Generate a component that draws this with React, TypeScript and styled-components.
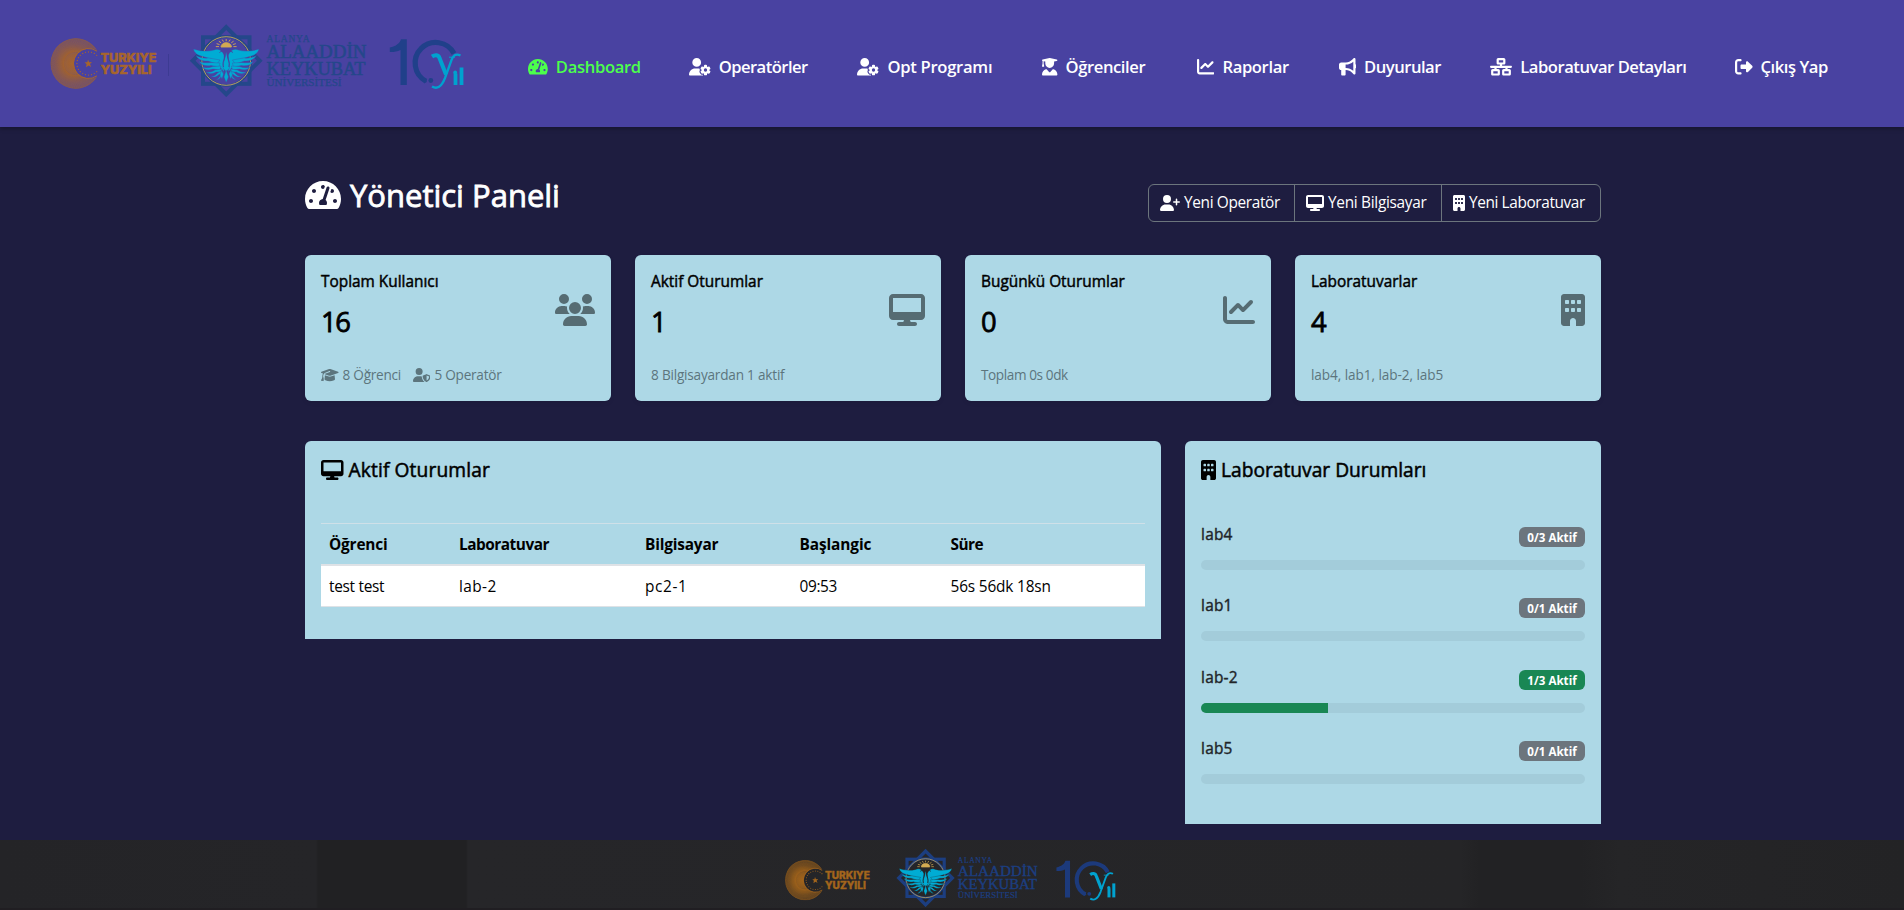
import React from "react";
import styled, { createGlobalStyle } from "styled-components";
import { FaTachometerAlt } from "react-icons/fa";
import {
  FaUserGear,
  FaUserGraduate,
  FaChartLine,
  FaBullhorn,
  FaNetworkWired,
  FaRightFromBracket,
  FaUserPlus,
  FaDesktop,
  FaBuilding,
  FaUsers,
  FaGraduationCap,
  FaUserShield,
} from "react-icons/fa6";
import type { IconType } from "react-icons";

const GlobalStyle = createGlobalStyle`
  *, *::before, *::after { box-sizing: border-box; }
  html, body { margin: 0; padding: 0; background: #1e1d40; overflow: hidden; }
  body { font-family: "Segoe UI", "Open Sans", "Noto Sans", sans-serif; font-size: 15.4px; line-height: 24px; color: #000; }
  h1, h2, h3, h4, p { margin: 0; font-weight: 400; }
  svg { display: block; flex: none; }
`;

/* ---------- page frame ---------- */

const Page = styled.div`
  display: flex;
  flex-direction: column;
  height: 910px;
  overflow: hidden;
`;

const Header = styled.header`
  display: flex;
  justify-content: space-between;
  height: 127px;
  flex: none;
  padding: 22px 75px 0 48px;
  background: #4942a1;
  box-shadow: 0 2px 4px rgba(0, 0, 0, 0.25);
`;

const Nav = styled.nav`
  display: flex;
  height: 90px;
  align-items: center;
  justify-content: space-between;
  width: 1301px;
`;

const NavLink = styled.a<{ $active?: boolean; $width: number; $tracking: number }>`
  display: flex;
  align-items: center;
  gap: 8px;
  width: ${(p) => p.$width}px;
  color: ${(p) => (p.$active ? "#4cff4c" : "#fff")};
  font-size: 16.6px;
  font-weight: 600;
  letter-spacing: ${(p) => p.$tracking}px;
  white-space: nowrap;
  text-decoration: none;
`;

/* Icons share one height; the width follows each glyph's own proportions. */
const Glyph = styled.span<{ $size: number; $ratio: number }>`
  display: flex;
  flex: none;
  svg {
    width: ${(p) => p.$size * p.$ratio}px;
    height: ${(p) => p.$size}px;
  }
`;

const Main = styled.main`
  flex: 1;
  width: 1296px;
  margin: 0 0 0 305px;
  padding-top: 48px;
`;

const Footer = styled.footer`
  display: flex;
  justify-content: center;
  height: 70px;
  flex: none;
  padding: 7px 3px 0 0;
  border-bottom: 2px solid #201e22;
  background: linear-gradient(
    90deg,
    #242427 0,
    #252528 316px,
    #212123 318px,
    #212123 466px,
    #262629 468px,
    #252527 1460px,
    #222224 1480px,
    #222224 1580px,
    #252527 1620px,
    #232325 100%
  );
`;

/* ---------- title row ---------- */

const TitleRow = styled.div`
  display: flex;
  justify-content: space-between;
  height: 80px;
`;

const Title = styled.h1`
  display: flex;
  align-items: center;
  gap: 9px;
  height: 40px;
  color: #fff;
  font-size: 31px;
  -webkit-text-stroke: 0.8px #fff;
  svg { stroke-width: 0; }
`;

const ButtonGroup = styled.div`
  display: flex;
  height: 38px;
  margin-top: 9px;
  border: 1px solid #6c757d;
  border-radius: 6px;
`;

const GroupButton = styled.button<{ $width: number; $tracking: number }>`
  display: flex;
  align-items: center;
  gap: 4px;
  width: ${(p) => p.$width}px;
  padding: 0 0 0 11px;
  border: 0;
  border-right: 1px solid #6c757d;
  background: none;
  color: #fff;
  font: inherit;
  letter-spacing: ${(p) => p.$tracking}px;
  white-space: nowrap;
  &:last-child { border-right: 0; }
`;

/* ---------- statistic cards ---------- */

const CardGrid = styled.div`
  display: grid;
  grid-template-columns: repeat(4, 306px);
  gap: 24px;
`;

const Card = styled.section`
  display: flex;
  flex-direction: column;
  justify-content: space-between;
  height: 146px;
  padding: 16px;
  border-radius: 6px;
  background: #add8e6;
  box-shadow: 0 2px 4px rgba(0, 0, 0, 0.08);
`;

const CardTop = styled.div`
  display: flex;
  justify-content: space-between;
  align-items: center;
  height: 78px;
  color: #566c73;
`;

const CardTitle = styled.h3`
  height: 31px;
  line-height: 21px;
  color: #000;
  font-size: 15.4px;
  -webkit-text-stroke: 0.45px #000;
`;

const CardValue = styled.p`
  height: 47px;
  line-height: 40px;
  color: #000;
  font-size: 27.4px;
  letter-spacing: -1.4px;
  -webkit-text-stroke: 0.8px #000;
`;

const CardNote = styled.div<{ $tracking?: number }>`
  display: flex;
  align-items: center;
  gap: 12px;
  height: 20px;
  color: #5c757d;
  font-size: 13.6px;
  letter-spacing: ${(p) => p.$tracking ?? 0}px;
`;

const NoteItem = styled.span`
  display: flex;
  align-items: center;
  gap: 4px;
`;

/* ---------- panels ---------- */

const PanelRow = styled.div`
  display: grid;
  grid-template-columns: 856px 416px;
  gap: 24px;
  align-items: start;
  margin-top: 40px;
`;

const Panel = styled.section<{ $height: number }>`
  height: ${(p) => p.$height}px;
  padding: 0 16px;
  border-radius: 6px 6px 0 0;
  background: #add8e6;
`;

const PanelHeading = styled.h2<{ $tracking?: number }>`
  display: flex;
  align-items: center;
  gap: 5px;
  height: 57px;
  font-size: 19.2px;
  letter-spacing: ${(p) => p.$tracking ?? 0}px;
  -webkit-text-stroke: 0.5px #000;
  svg { stroke-width: 0; }
`;

const Table = styled.div`
  margin-top: 25px;
  border-top: 1px solid #cfe0e8;
`;

const TableRow = styled.div<{ $head?: boolean }>`
  display: grid;
  grid-template-columns: 130px 186px 154.5px 151px 1fr;
  align-items: center;
  height: ${(p) => (p.$head ? 42 : 41)}px;
  padding: ${(p) => (p.$head ? 2 : 1)}px 0 0 8px;
  background: ${(p) => (p.$head ? "transparent" : "#fff")};
  font-weight: ${(p) => (p.$head ? 700 : 400)};
  border-bottom: ${(p) => (p.$head ? 2 : 1)}px solid #dee2e6;
`;

const Cell = styled.span<{ $tracking: number }>`
  letter-spacing: ${(p) => p.$tracking}px;
`;

const LabList = styled.div`
  display: flex;
  flex-direction: column;
  padding-top: 25px;
`;

const LabItem = styled.div`
  height: 71.3px;
`;

const LabTop = styled.div`
  display: flex;
  justify-content: space-between;
  height: 37px;
`;

const LabName = styled.h4`
  height: 24px;
  color: #212529;
  line-height: 23px;
  letter-spacing: 0.25px;
  -webkit-text-stroke: 0.4px #212529;
`;

const Badge = styled.span<{ $on: boolean }>`
  width: 66px;
  height: 20px;
  margin-top: 4px;
  border-radius: 6px;
  background: ${(p) => (p.$on ? "#198754" : "#6c757d")};
  color: #fff;
  font-size: 11.6px;
  font-weight: 700;
  line-height: 21px;
  text-align: center;
`;

const Track = styled.div`
  height: 10px;
  overflow: hidden;
  border-radius: 5px;
  background: #a3ccda;
`;

const TrackFill = styled.div`
  height: 100%;
  background: #198754;
`;

/* ---------- icons ---------- */

const ratios = new Map<IconType, number>([
  [FaTachometerAlt, 1.125],
  [FaDesktop, 1.125],
  [FaUserGear, 1.25],
  [FaUserPlus, 1.25],
  [FaUserShield, 1.25],
  [FaUsers, 1.25],
  [FaGraduationCap, 1.25],
  [FaNetworkWired, 1.25],
  [FaUserGraduate, 0.875],
  [FaBuilding, 0.75],
]);

function Icon({ of: Shape, size }: { of: IconType; size: number }) {
  return (
    <Glyph $size={size} $ratio={ratios.get(Shape) ?? 1}>
      <Shape />
    </Glyph>
  );
}

/* ---------- logos ---------- */

const rays = Array.from({ length: 36 }, (_, i) => i * 5);
const dots = Array.from({ length: 19 }, (_, i) => ((45 + i * 15) * Math.PI) / 180);
const sunRays = Array.from({ length: 9 }, (_, i) => ((180 + i * 22.5) * Math.PI) / 180);

interface LogoProps {
  width: number;
  height: number;
  orange: string;
  blue: string;
  navy: string;
  ground: string;
  divider?: string;
}

function Wing() {
  return (
    <>
      <path d="M224 55 C222 50 218 48 214 50 C207 52 199 51 193.500 49 C194 53 198 55.500 203 56.500 L214 60 L224 72 Z" />
      <path d="M196 55.500 C198 59.500 203 61.500 208 61 L217 64 L220 60 L209 58 C204 58.500 199 57.500 196 55.500 Z" />
      <path d="M199 61.500 C201 65 206 66.500 211 65.500 L219 67 L220 63 L211 62.500 C207 63 202 63 199 61.500 Z" />
      <path d="M202 67 C205 70 209 70.500 213 69 L220 70 L221 66 L213 66.500 C209 68 205 68 202 67 Z" />
      <path d="M206 72 C209 74.500 213 74 216 72 L222 72 L222 69 L215 70 C212 72 209 72.500 206 72 Z" />
      <path d="M211 76.500 C214 78 217 76.500 219 74.500 L223 74 L222 71 L218 72.500 C216 75 214 76.500 211 76.500 Z" />
      <path d="M216 80 C219 80 221 77.500 222 75 L224 72 L221 74 C220 77 218 79 216 80 Z" />
    </>
  );
}

function Logos({ width, height, orange, blue, navy, ground, divider }: LogoProps) {
  const id = "glow" + width;
  return (
    <svg width={width} height={height} viewBox="48 22 420 75">
      <defs>
        <radialGradient id={id} gradientUnits="userSpaceOnUse" cx="73" cy="63.500" r="25">
          <stop offset="0" stopColor={orange} />
          <stop offset="0.35" stopColor={orange} stopOpacity="0.85" />
          <stop offset="0.75" stopColor={orange} stopOpacity="0.45" />
          <stop offset="1" stopColor={orange} stopOpacity="0.3" />
        </radialGradient>
        <clipPath id={id + "c"}>
          <path d="M98 50.500 A25.500 25.500 0 1 0 98 76.500 A15 15 0 1 1 98 50.500 Z" />
        </clipPath>
      </defs>
      <g clipPath={`url(#${id}c)`}>
        <circle cx="75.500" cy="63.500" r="25.500" fill={`url(#${id})`} />
        <g fill="none" stroke={orange} strokeWidth="0.3" opacity="0.7">
          {rays.map((a) => (
            <ellipse key={a} cx="75.500" cy="63.500" rx="25" ry="12" transform={`rotate(${a} 75.500 63.500)`} />
          ))}
        </g>
      </g>
      <circle cx="88.500" cy="63.500" r="14.500" fill={ground} />
      <path d="M97 51.200 A15 15 0 1 0 97 75.800" fill="none" stroke={orange} strokeWidth="1" />
      <g fill={orange}>
        {dots.map((a) => (
          <circle key={a} cx={88.5 + 11.6 * Math.cos(a)} cy={63.5 + 11.6 * Math.sin(a)} r="0.65" />
        ))}
        <path d="M88 59.500 L89.200 62.200 L92 62 L90 64.100 L91.200 67 L88.600 65.500 L86 67.300 L86.600 64.300 L84.600 62.300 L87.300 62.200 Z" />
      </g>
      <g fill={orange} stroke={orange} strokeWidth="0.5" fontFamily="Inter, sans-serif" fontWeight="800" fontSize="12.200">
        <text x="100.500" y="62.200" textLength="56" lengthAdjust="spacingAndGlyphs">TURKIYE</text>
        <text x="100.500" y="74" textLength="51" lengthAdjust="spacingAndGlyphs">YUZYILI</text>
      </g>
      {divider && <rect x="168" y="54" width="1" height="22" fill={divider} />}

      <g fill="none" stroke={blue} strokeWidth="4">
        <rect x="203" y="37.300" width="46.500" height="46.500" />
        <rect x="202.500" y="37" width="47.500" height="47.500" transform="rotate(45 226.250 60.700)" />
      </g>
      <circle cx="226.200" cy="61" r="24.500" fill={ground} stroke={blue} strokeWidth="2.500" />
      <circle cx="226.200" cy="61" r="24.300" fill="none" stroke="#c9a75a" strokeWidth="0.9" />
      <g fill="#d3aa52" stroke="#d3aa52" strokeWidth="0.9">
        <path d="M221 47 A5.200 4.300 0 0 1 231.400 47 Z" />
        {sunRays.map((a) => (
          <line
            key={a}
            x1={226.2 + 7.2 * Math.cos(a)}
            y1={46.6 + 5.4 * Math.sin(a)}
            x2={226.2 + 10.4 * Math.cos(a)}
            y2={46.6 + 7.6 * Math.sin(a)}
          />
        ))}
      </g>
      <g fill="#00acd4" stroke={ground} strokeWidth="0.35">
        <Wing />
        <g transform="translate(452.400 0) scale(-1 1)">
          <Wing />
        </g>
        <path d="M226.200 52 L229 63 L229.500 68 L226.200 72 L223 68 L223.500 63 Z" />
        <path d="M226.200 70 L228.500 77 L226.200 82.500 L224 77 Z" />
        <path d="M221.500 70 L223.500 74 L222 79 L220 75 Z M231 70 L229 74 L230.500 79 L232.500 75 Z" />
      </g>
      <g fill="none" stroke={ground} strokeWidth="1">
        <path d="M219.500 52.500 C222 50 225.500 52 225 56 C224.500 60 222 62 223.500 67" />
        <path d="M232.900 52.500 C230.400 50 226.900 52 227.400 56 C227.900 60 230.400 62 228.900 67" />
      </g>

      <g fill={blue} stroke={blue} strokeWidth="0.25" fontFamily='"Liberation Serif", serif'>
        <text x="266.500" y="42" fontSize="9.500" textLength="43" lengthAdjust="spacing">ALANYA</text>
        <text x="266.500" y="58" fontSize="17.800" strokeWidth="0.5" textLength="100" lengthAdjust="spacingAndGlyphs">ALAADDİN</text>
        <text x="266.500" y="75" fontSize="17.800" strokeWidth="0.5" textLength="99" lengthAdjust="spacingAndGlyphs">KEYKUBAT</text>
        <text x="266.500" y="86" fontSize="9.800" textLength="75" lengthAdjust="spacingAndGlyphs">ÜNİVERSİTESİ</text>
      </g>

      <g fill={navy}>
        <path d="M389.800 47.500 C396 46.500 400 43 401 39.300 H406.800 V85 H400.500 V50 C397 51.800 393 52.200 389.800 52 Z" />
        <circle cx="430.800" cy="80.500" r="2.400" />
        <circle cx="425.200" cy="81" r="1.700" />
      </g>
      <path d="M426 81.200 A20.600 20.600 0 1 1 454 53.500" fill="none" stroke={navy} strokeWidth="5.200" />
      <g fill="none" stroke="#00a2cf">
        <path d="M432 56.500 C435 54.500 438.500 54.500 439.500 58 L446 74.500" strokeWidth="4" />
        <path d="M460.500 55.500 C455.500 53 453 56 451.500 60 L445 78 C441.500 87 437 89.500 432 86.500" strokeWidth="2.300" />
        <path d="M449 57.200 H455" strokeWidth="1" />
        <path d="M455.500 73.500 V85" strokeWidth="3.800" />
        <path d="M461.500 67.500 V85" strokeWidth="3.800" />
      </g>
      <circle cx="455.200" cy="72.500" r="1.900" fill="#00a2cf" />
    </svg>
  );
}

/* ---------- data ---------- */

interface NavEntry {
  icon: IconType;
  label: string;
  width: number;
  tracking: number;
}

const navEntries: NavEntry[] = [
  { icon: FaTachometerAlt, label: "Dashboard", width: 111, tracking: -0.33 },
  { icon: FaUserGear, label: "Operatörler", width: 119, tracking: -0.55 },
  { icon: FaUserGear, label: "Opt Programı", width: 135, tracking: -0.28 },
  { icon: FaUserGraduate, label: "Öğrenciler", width: 105, tracking: -0.4 },
  { icon: FaChartLine, label: "Raporlar", width: 92, tracking: -0.37 },
  { icon: FaBullhorn, label: "Duyurular", width: 102, tracking: -0.5 },
  { icon: FaNetworkWired, label: "Laboratuvar Detayları", width: 195, tracking: -0.46 },
  { icon: FaRightFromBracket, label: "Çıkış Yap", width: 94, tracking: -0.45 },
];

const actions = [
  { icon: FaUserPlus, label: "Yeni Operatör", width: 146, tracking: -0.35 },
  { icon: FaDesktop, label: "Yeni Bilgisayar", width: 147, tracking: -0.3 },
  { icon: FaBuilding, label: "Yeni Laboratuvar", width: 158, tracking: -0.39 },
];

interface Stat {
  title: string;
  value: string;
  icon: IconType;
  tracking: number;
  notes: { icon?: IconType; text: string }[];
}

const stats: Stat[] = [
  {
    title: "Toplam Kullanıcı",
    value: "16",
    icon: FaUsers,
    tracking: -0.25,
    notes: [
      { icon: FaGraduationCap, text: "8 Öğrenci" },
      { icon: FaUserShield, text: "5 Operatör" },
    ],
  },
  { title: "Aktif Oturumlar", value: "1", icon: FaDesktop, tracking: -0.21, notes: [{ text: "8 Bilgisayardan 1 aktif" }] },
  { title: "Bugünkü Oturumlar", value: "0", icon: FaChartLine, tracking: -0.41, notes: [{ text: "Toplam 0s 0dk" }] },
  { title: "Laboratuvarlar", value: "4", icon: FaBuilding, tracking: -0.07, notes: [{ text: "lab4, lab1, lab-2, lab5" }] },
];

const columns: [string, number][] = [
  ["Öğrenci", -0.18],
  ["Laboratuvar", -0.49],
  ["Bilgisayar", -0.18],
  ["Başlangic", -0.1],
  ["Süre", -0.5],
];
const session: [string, number][] = [
  ["test test", -0.3],
  ["lab-2", 0.42],
  ["pc2-1", 0.6],
  ["09:53", -0.36],
  ["56s 56dk 18sn", -0.16],
];

const labs = [
  { name: "lab4", active: 0, total: 3 },
  { name: "lab1", active: 0, total: 1 },
  { name: "lab-2", active: 1, total: 3 },
  { name: "lab5", active: 0, total: 1 },
];

/* ---------- page ---------- */

export default function App() {
  return (
    <Page>
      <GlobalStyle />
      <Header>
        <Logos width={420} height={75} orange="#a7652c" blue="#24478a" navy="#20408a" ground="#4942a1" divider="#3d3b93" />
        <Nav>
          {navEntries.map(({ icon, label, width, tracking }, i) => (
            <NavLink key={label} $active={i === 0} $width={width} $tracking={tracking}>
              <Icon of={icon} size={17.6} />
              {label}
            </NavLink>
          ))}
        </Nav>
      </Header>

      <Main>
        <TitleRow>
          <Title>
            <Icon of={FaTachometerAlt} size={32} />
            Yönetici Paneli
          </Title>
          <ButtonGroup>
            {actions.map(({ icon, label, width, tracking }) => (
              <GroupButton key={label} $width={width} $tracking={tracking}>
                <Icon of={icon} size={16} />
                {label}
              </GroupButton>
            ))}
          </ButtonGroup>
        </TitleRow>

        <CardGrid>
          {stats.map(({ title, value, icon, tracking, notes }) => (
            <Card key={title}>
              <CardTop>
                <div>
                  <CardTitle>{title}</CardTitle>
                  <CardValue>{value}</CardValue>
                </div>
                <Icon of={icon} size={32} />
              </CardTop>
              <CardNote $tracking={tracking}>
                {notes.map((note) => (
                  <NoteItem key={note.text}>
                    {note.icon && <Icon of={note.icon} size={14} />}
                    {note.text}
                  </NoteItem>
                ))}
              </CardNote>
            </Card>
          ))}
        </CardGrid>

        <PanelRow>
          <Panel $height={198}>
            <PanelHeading $tracking={0.12}>
              <Icon of={FaDesktop} size={20} />
              Aktif Oturumlar
            </PanelHeading>
            <Table>
              <TableRow $head>
                {columns.map(([text, tracking]) => (
                  <Cell key={text} $tracking={tracking}>{text}</Cell>
                ))}
              </TableRow>
              <TableRow>
                {session.map(([text, tracking]) => (
                  <Cell key={text} $tracking={tracking}>{text}</Cell>
                ))}
              </TableRow>
            </Table>
          </Panel>

          <Panel $height={383}>
            <PanelHeading>
              <Icon of={FaBuilding} size={20} />
              Laboratuvar Durumları
            </PanelHeading>
            <LabList>
              {labs.map(({ name, active, total }) => (
                <LabItem key={name}>
                  <LabTop>
                    <LabName>{name}</LabName>
                    <Badge $on={active > 0}>
                      {active}/{total} Aktif
                    </Badge>
                  </LabTop>
                  <Track>
                    <TrackFill style={{ width: `${Math.floor((active / total) * 100)}%` }} />
                  </Track>
                </LabItem>
              ))}
            </LabList>
          </Panel>
        </PanelRow>
      </Main>

      <Footer>
        <Logos width={336} height={60} orange="#a3651c" blue="#1c3e80" navy="#1c3a7c" ground="#252528" />
      </Footer>
    </Page>
  );
}
